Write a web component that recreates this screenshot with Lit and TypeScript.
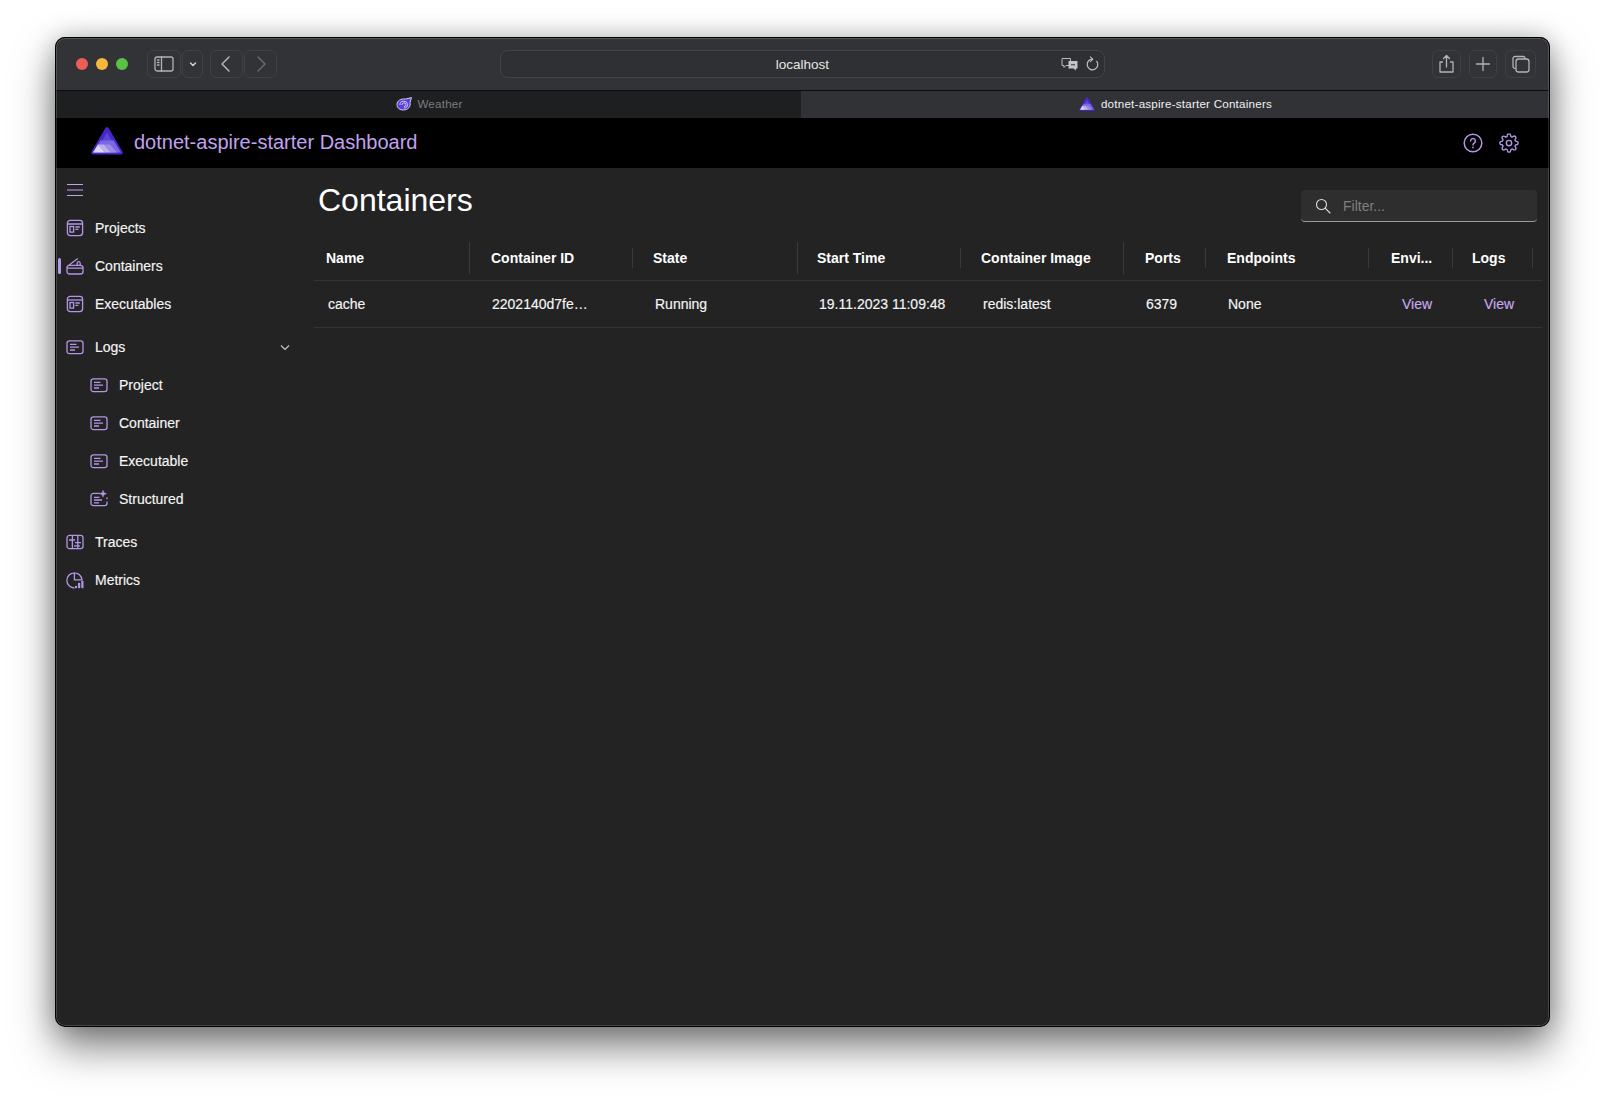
import { LitElement, html, css, svg } from 'lit';
import { customElement } from 'lit/decorators.js';

const accent = '#b296e6';

const icons: Record<string, unknown> = {
  app: svg`<rect x="1.4" y="1.4" width="15.2" height="15.2" rx="2.8"/><path d="M1.400 5h15.200"/><rect x="4" y="7.500" width="3.600" height="5.600"/><path d="M9.400 8h4.400M9.400 10.300h3"/>`,
  box: svg`<path d="M1 10.500A2.400 2.400 0 0 1 3.400 8.400h11.200A2.400 2.400 0 0 1 17 10.500v3.900a2.600 2.600 0 0 1-2.600 2.600H3.600A2.600 2.600 0 0 1 1 14.400Z"/><path d="M1 11.200h16M2.800 8.200 11.800 1.400M11.200 8.200V6.200a1.500 1.500 0 0 1 3 0v2"/>`,
  log: svg`<rect x="1" y="2.800" width="16" height="12.800" rx="2.400"/><path d="M4 6.400h6.500M4 9.200h9M4 12h5"/>`,
  spark: svg`<path d="M9.800 3.400H3.400A2.400 2.400 0 0 0 1 5.800v7.400a2.400 2.400 0 0 0 2.400 2.400h11.200a2.400 2.400 0 0 0 2.400-2.400v-1.600"/><path d="M4 7.400h5.500M4 10h8M4 12.800h5"/><path d="M13 .2l1 2.500 2.600 1-2.600 1-1 2.500-1-2.500-2.600-1 2.600-1z" fill=${accent} stroke=${accent} stroke-width=".4"/><path d="M17 7.400v1.800M16.100 8.300h1.800" stroke-width=".8"/>`,
  trace: svg`<rect x="1" y="2.400" width="16" height="13.200" rx="2.400"/><path d="M6.400 2.400v13.200M11.800 2.400v13.200M3 7h6M9 9.600h6M8 12.800h6"/>`,
  metric: svg`<path d="M8.400 17A7.600 7.600 0 1 1 16 8.800H8.400V1.300"/><circle cx="10" cy="16" r="1.200" fill=${accent} stroke="none"/><rect x="12" y="11.800" width="2.200" height="5.400" rx=".6" fill=${accent} stroke="none"/><rect x="15.300" y="9.800" width="2.200" height="7.400" rx=".6" fill=${accent} stroke="none"/>`,
};

interface NavItem { label: string; icon: string; sub?: boolean; active?: boolean; gap?: boolean; chevron?: boolean }

const nav: NavItem[] = [
  { label: 'Projects', icon: 'app' },
  { label: 'Containers', icon: 'box', active: true },
  { label: 'Executables', icon: 'app' },
  { label: 'Logs', icon: 'log', gap: true, chevron: true },
  { label: 'Project', icon: 'log', sub: true },
  { label: 'Container', icon: 'log', sub: true },
  { label: 'Executable', icon: 'log', sub: true },
  { label: 'Structured', icon: 'spark', sub: true },
  { label: 'Traces', icon: 'trace', gap: true },
  { label: 'Metrics', icon: 'metric' },
];

// headPad / cellPad: left padding per column, the real table sizes them from its own cell templates
const columns = [
  { head: 'Name', cell: 'cache', tall: true, headPad: 12, cellPad: 14 },
  { head: 'Container ID', cell: '2202140d7fe…', tall: false, headPad: 21, cellPad: 22 },
  { head: 'State', cell: 'Running', tall: true, headPad: 20, cellPad: 22 },
  { head: 'Start Time', cell: '19.11.2023 11:09:48', tall: false, headPad: 19, cellPad: 21 },
  { head: 'Container Image', cell: 'redis:latest', tall: true, headPad: 20, cellPad: 22 },
  { head: 'Ports', cell: '6379', tall: false, headPad: 21, cellPad: 22 },
  { head: 'Endpoints', cell: 'None', tall: false, headPad: 21, cellPad: 22 },
  { head: 'Envi...', cell: 'View', tall: false, link: true, headPad: 22, cellPad: 33 },
  { head: 'Logs', cell: 'View', tall: false, link: true, headPad: 19, cellPad: 31 },
];

const logo = (w: number, h: number) => html`<svg width=${w} height=${h} viewBox="0 0 32 28">
  <path d="M16 2 30 25.600H2Z" fill="#5b45d6" stroke="#4a26c9" stroke-width="3.600" stroke-linejoin="round"/>
  <path d="M9.400 13.400h13.200l7.400 12.200H2Z" fill="#7a68e0"/>
  <path d="M7 17.400 14 25.600H2Z" fill="#dcd6f7"/>
  <path d="M7 17.400h6l7 8.200H14Z" fill="#bcb1ee"/>
  <path d="M13 17.400h6l7 8.200h-6Z" fill="#9a8ce7"/>
</svg>`;

@customElement('app-root')
export class AppRoot extends LitElement {
  static styles = css`
    :host {
      display: block;
      width: 1605px;
      height: 1100px;
      padding: 37px 55px 0 55px;
      box-sizing: border-box;
      background: #fff;
      font-family: "Liberation Sans", Arial, sans-serif;
      overflow: hidden;
    }
    .frame {
      height: 990px;
      border-radius: 10px;
      box-shadow: 0 20px 40px rgba(0, 0, 0, 0.5), 0 0 24px rgba(0, 0, 0, 0.22);
    }
    .window {
      position: relative;
      height: 990px;
      border-radius: 10px;
      overflow: hidden;
      background: #232323;
      display: flex;
      flex-direction: column;
    }
    .window::after {
      content: '';
      position: absolute;
      inset: 0;
      border-radius: 10px;
      border: 1px solid #000;
      box-shadow: inset 0 0 0 1px rgba(255, 255, 255, 0.16);
      pointer-events: none;
    }

    .toolbar {
      height: 54px;
      background: #323336;
      display: flex;
      align-items: center;
      padding: 1px 14px 0 21px;
      flex: none;
      border-bottom: 1px solid #0c0c0c;
      box-sizing: border-box;
    }
    .lights { display: flex; gap: 8px; margin-right: 19px; }
    .lights i { width: 12px; height: 12px; border-radius: 50%; display: block; }
    .tool-group { display: flex; gap: 1px; }
    .btn {
      height: 28px;
      border: 1px solid #404144;
      border-radius: 6px;
      box-sizing: border-box;
      display: flex;
      align-items: center;
      justify-content: center;
    }
    .back-group { margin-left: 7px; margin-right: 223px; }
    .url {
      width: 605px;
      height: 28px;
      border: 1px solid #434447;
      border-radius: 8px;
      box-sizing: border-box;
      display: flex;
      align-items: center;
      justify-content: center;
      position: relative;
      color: #e6e6e6;
      font-size: 13.5px;
      background: #2f3033;
    }
    .url-tools {
      position: absolute;
      right: 5px;
      top: 5px;
      display: flex;
      gap: 6px;
      align-items: center;
    }
    .right-group { margin-left: auto; display: flex; gap: 8px; }

    .tabs {
      height: 27px;
      box-sizing: border-box;
      display: flex;
      flex: none;
      font-size: 11.6px;
      letter-spacing: 0.02em;
      background: #1e1f20;
    }
    .tab {
      display: flex;
      align-items: center;
      justify-content: center;
      gap: 5px;
      width: 746px;
      padding: 0 0 2px 3px;
      color: #7d7d7d;
      box-sizing: border-box;
    }
    .tab.on {
      flex: 1;
      background: #313236;
      color: #f0f0f0;
      padding-left: 0;
      gap: 6px;
    }

    .header {
      height: 50px;
      background: #000;
      flex: none;
      display: flex;
      align-items: center;
      padding: 0 31px 0 36px;
    }
    .logo { display: flex; margin-bottom: 4px; }
    .brand {
      color: #c0a2f0;
      font-size: 20px;
      margin-left: 11px;
      padding-bottom: 2px;
      flex: 1;
    }
    .head-tools { display: flex; gap: 16px; align-items: center; }

    .body { display: flex; flex: 1; min-height: 0; }
    .side { width: 259px; flex: none; padding-top: 15px; box-sizing: border-box; }
    .burger { margin-left: 11px; height: 14px; display: block; margin-bottom: 12px; }
    .row {
      height: 38px;
      display: flex;
      align-items: center;
      color: #f5f5f5;
      font-size: 14px;
      -webkit-text-stroke: 0.15px #f5f5f5;
      position: relative;
      padding-left: 11px;
    }
    .row.sub { padding-left: 35px; }
    .row.gap { margin-top: 5px; }
    .row svg.icon { margin-right: 11px; flex: none; }
    .row .chev { position: absolute; right: 24px; top: 16px; }
    .row.on::before {
      content: '';
      position: absolute;
      left: 3px;
      top: 11px;
      width: 3px;
      height: 16px;
      border-radius: 2px;
      background: #b79aea;
    }

    .main { flex: 1; min-width: 0; padding-right: 9px; }
    .top { display: flex; align-items: flex-start; height: 74px; }
    h1 {
      margin: 14px 0 0 4px;
      font-size: 32px;
      font-weight: 400;
      color: #fff;
      line-height: 37px;
      flex: 1;
    }
    .filter {
      width: 236px;
      height: 32px;
      margin: 22px 4px 0 0;
      background: #2e2e2e;
      border-radius: 4px;
      border-bottom: 1px solid #9a9a9a;
      box-sizing: border-box;
      display: flex;
      align-items: center;
      gap: 12px;
      padding-left: 14px;
      color: #7f7f7f;
      font-size: 14px;
    }

    .grid {
      display: grid;
      grid-template-columns: 156px 163px 165px 163px 163px 82px 163px 84px 80px 9px;
    }
    .hd {
      height: 39px;
      padding-bottom: 7px;
      box-sizing: border-box;
      border-bottom: 1px solid #333;
      color: #fff;
      font-weight: 700;
      font-size: 14px;
      display: flex;
      align-items: center;
      position: relative;
    }
    .hd::after {
      content: '';
      position: absolute;
      right: 0;
      top: 6px;
      height: 20px;
      width: 1px;
      background: #3a3a3a;
    }
    .hd.tall::after { top: 0; height: 32px; }
    .hd.end::after { display: none; }
    .cell {
      height: 47px;
      box-sizing: border-box;
      border-bottom: 1px solid #333;
      color: #f5f5f5;
      font-size: 14px;
      -webkit-text-stroke: 0.15px #f5f5f5;
      display: flex;
      align-items: center;
    }
    .cell.link {
      color: #c9a9ef;
      -webkit-text-stroke: 0.15px #c9a9ef;
    }
  `;

  private stroke(body: unknown, w = 20, h = 20, col = '#b4b4b6') {
    return html`<svg width=${w} height=${h} viewBox="0 0 ${w} ${h}" fill="none" stroke=${col} stroke-width="1.300" stroke-linecap="round" stroke-linejoin="round">${body}</svg>`;
  }

  render() {
    return html`
      <div class="frame">
      <div class="window">
        <div class="toolbar">
          <div class="lights">
            <i style="background:#ec5f57"></i><i style="background:#f5b83d"></i><i style="background:#5ac146"></i>
          </div>
          <div class="tool-group">
            <div class="btn" style="width:34px">${this.stroke(svg`<rect x="1" y="3" width="18" height="14" rx="2"/><path d="M7.500 3v14M3.500 6h1.500M3.500 8.500h1.500M3.500 11h1.500"/>`)}</div>
            <div class="btn" style="width:21px">${this.stroke(svg`<path d="M2.500 4 5 6.500 7.500 4" stroke-width="1.500"/>`, 10, 10, '#d0d0d0')}</div>
          </div>
          <div class="tool-group back-group">
            <div class="btn" style="width:33px">${this.stroke(svg`<path d="M11 3 4 10l7 7" stroke-width="1.500"/>`, 18, 20)}</div>
            <div class="btn" style="width:33px">${this.stroke(svg`<path d="M6 3l7 7-7 7" stroke-width="1.500"/>`, 18, 20, '#67686a')}</div>
          </div>
          <div class="url">localhost
            <div class="url-tools">
              <svg width="18" height="16" viewBox="0 0 18 16">
                <path d="M1 2.500h8.500v7H5L3 11.500v-2H1Z" fill="none" stroke="#b9b9b9" stroke-width="1"/>
                <path d="M7.500 5h9v7.500h-1.500v2l-2.500-2h-5Z" fill="#c4c4c4"/>
                <path d="M10 8.800h4" stroke="#333" stroke-width="1"/>
              </svg>
              ${this.stroke(svg`<path d="M11.800 5.400A5.300 5.300 0 1 1 7 3.200"/><path d="M5.400.8 7.800 3.200 5.400 5.600" stroke-width="1.100"/>`, 14, 16, '#bdbdbd')}
            </div>
          </div>
          <div class="right-group">
            <div class="btn" style="width:29px;border-color:#3f4043">${this.stroke(svg`<path d="M5.500 8H3v10h13V8h-2.500M9.500 13V2M6.500 4.500l3-3 3 3"/>`, 19, 20)}</div>
            <div class="btn" style="width:28px;border-color:#3f4043">${this.stroke(svg`<path d="M9 2.500v13M2.500 9h13"/>`, 18, 18)}</div>
            <div class="btn" style="width:31px;border-color:#3f4043">${this.stroke(svg`<rect x="5" y="5" width="13" height="13" rx="2.500"/><path d="M4 14.500a2 2 0 0 1-2-2V4.500a2 2 0 0 1 2-2h8a2 2 0 0 1 2 2"/>`, 20, 20)}</div>
          </div>
        </div>

        <div class="tabs">
          <div class="tab">
            <svg width="16" height="14" viewBox="0 0 16 14">
              <path d="M1 7.500C1 3.500 5 1.500 9.500 2L15.500.6 14 5.500c1 4-2 7.500-6.500 7.500C3.500 13 1 11 1 7.500Z" fill="#5b3fd8" stroke="#e4dffa" stroke-width=".9"/>
              <path d="M4 8a3.800 3.400 0 1 1 4 3M6 8a2 1.800 0 1 1 2 1.500" fill="none" stroke="#dcd5fa" stroke-width=".9"/>
            </svg>
            <span>Weather</span>
          </div>
          <div class="tab on">${logo(16, 14)}<span>dotnet-aspire-starter Containers</span></div>
        </div>

        <div class="header">
          <div class="logo">${logo(32, 28)}</div>
          <div class="brand">dotnet-aspire-starter Dashboard</div>
          <div class="head-tools">
            <svg width="20" height="20" viewBox="0 0 20 20" fill="none" stroke=${accent} stroke-width="1.500" stroke-linecap="round">
              <circle cx="10" cy="10" r="8.800"/>
              <path d="M7.600 8a2.400 2.400 0 1 1 3.600 2.100c-.8.500-1.200.9-1.200 1.800"/>
              <circle cx="10" cy="14.400" r=".9" fill=${accent} stroke="none"/>
            </svg>
            <svg width="20" height="20" viewBox="0 0 24 24" fill="none" stroke=${accent} stroke-width="1.700" stroke-linejoin="round">
              <circle cx="12" cy="12" r="3.200"/>
              <path d="M19.400 15a1.650 1.650 0 0 0 .33 1.820l.06.06a2 2 0 0 1 0 2.830 2 2 0 0 1-2.830 0l-.06-.06a1.650 1.650 0 0 0-1.820-.33 1.650 1.650 0 0 0-1 1.510V21a2 2 0 0 1-2 2 2 2 0 0 1-2-2v-.09A1.650 1.650 0 0 0 9 19.400a1.650 1.650 0 0 0-1.820.33l-.06.06a2 2 0 0 1-2.830 0 2 2 0 0 1 0-2.830l.06-.06a1.650 1.650 0 0 0 .33-1.820 1.650 1.650 0 0 0-1.510-1H3a2 2 0 0 1-2-2 2 2 0 0 1 2-2h.09A1.650 1.650 0 0 0 4.600 9a1.650 1.650 0 0 0-.33-1.820l-.06-.06a2 2 0 0 1 0-2.830 2 2 0 0 1 2.830 0l.06.06a1.650 1.650 0 0 0 1.820.33H9a1.650 1.650 0 0 0 1-1.510V3a2 2 0 0 1 2-2 2 2 0 0 1 2 2v.09a1.650 1.650 0 0 0 1 1.510 1.650 1.650 0 0 0 1.820-.33l.06-.06a2 2 0 0 1 2.830 0 2 2 0 0 1 0 2.830l-.06.06a1.650 1.650 0 0 0-.33 1.820V9a1.650 1.650 0 0 0 1.510 1H21a2 2 0 0 1 2 2 2 2 0 0 1-2 2h-.09a1.650 1.650 0 0 0-1.510 1z"/>
            </svg>
          </div>
        </div>

        <div class="body">
          <div class="side">
            <svg class="burger" width="18" height="14" viewBox="0 0 18 14" fill="none" stroke="#bda4ec" stroke-width="1">
              <path d="M1 1.500h16M1 7h16M1 12.500h16"/>
            </svg>
            ${nav.map((n) => html`
              <div class="row ${n.sub ? 'sub' : ''} ${n.active ? 'on' : ''} ${n.gap ? 'gap' : ''}">
                <svg class="icon" width="18" height="18" viewBox="0 0 18 18" fill="none" stroke=${accent} stroke-width="1.300">${icons[n.icon]}</svg>
                <span>${n.label}</span>
                ${n.chevron ? html`<svg class="chev" width="10" height="8" viewBox="0 0 10 8" fill="none" stroke="#c8c8c8" stroke-width="1.100"><path d="M1 1.500 5 5.500l4-4"/></svg>` : ''}
              </div>`)}
          </div>

          <div class="main">
            <div class="top">
              <h1>Containers</h1>
              <div class="filter">
                <svg width="16" height="16" viewBox="0 0 16 16" fill="none" stroke="#dcdcdc" stroke-width="1.100" stroke-linecap="round">
                  <circle cx="6.500" cy="6.500" r="5"/><path d="M10.200 10.200 15 15"/>
                </svg>
                <span>Filter...</span>
              </div>
            </div>
            <div class="grid">
              ${columns.map((c) => html`<div class="hd ${c.tall ? 'tall' : ''}" style="padding-left:${c.headPad}px">${c.head}</div>`)}
              <div class="hd end"></div>
              ${columns.map((c) => html`<div class="cell ${c.link ? 'link' : ''}" style="padding-left:${c.cellPad}px">${c.cell}</div>`)}
              <div class="cell"></div>
            </div>
          </div>
        </div>
      </div>
      </div>
    `;
  }
}
